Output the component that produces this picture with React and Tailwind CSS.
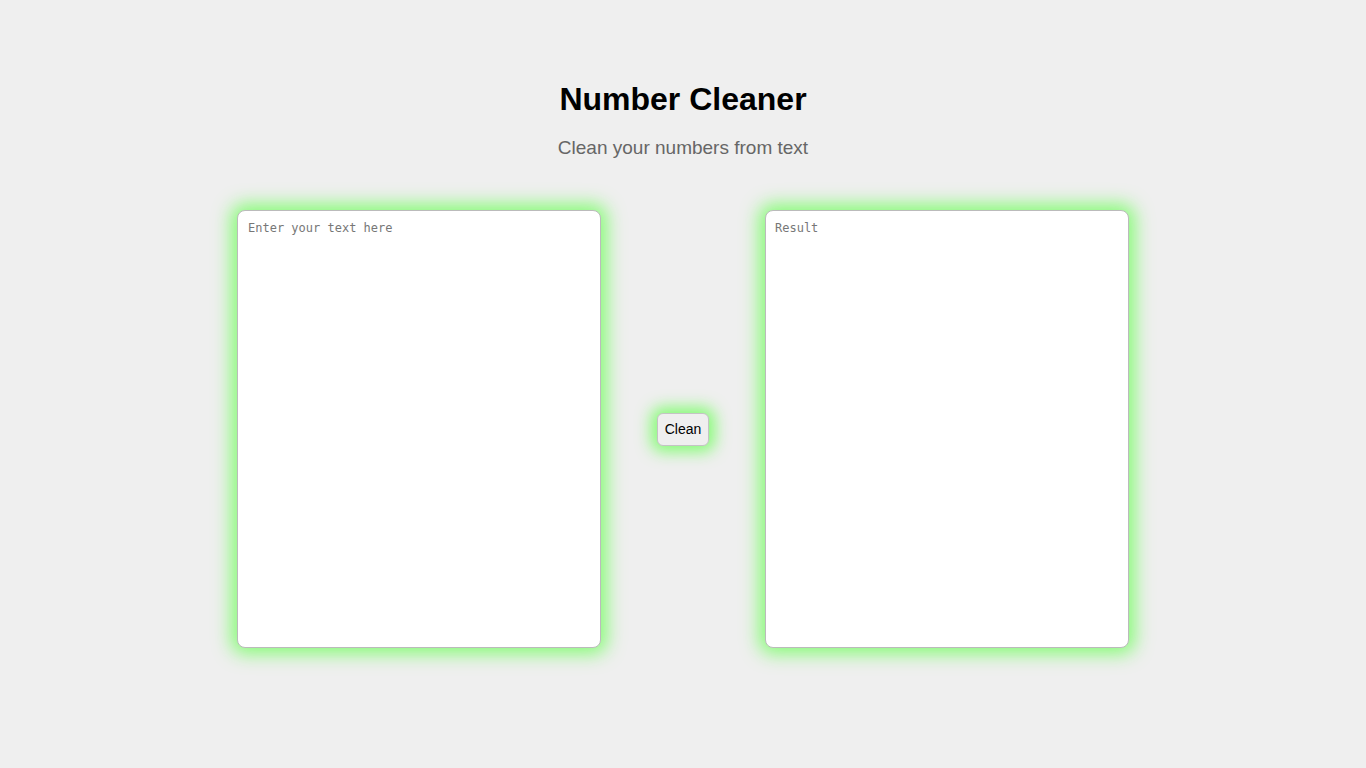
export default function App() {
	return (
		<div className="min-h-screen bg-[#efefef] pt-[81px] text-center font-['Liberation_Sans',Arial,sans-serif]">
			<h1 className="text-[32px] font-bold leading-[37px] text-black">Number Cleaner</h1>
			<p className="mt-[19px] text-[19px] leading-[22px] text-[#666]">Clean your numbers from text</p>
			<div className="mt-[51px] flex items-center justify-center gap-[56px]">
				<textarea
					placeholder="Enter your text here"
					className="h-[438px] w-[364px] resize-none rounded-[8px] border border-[#bbb] bg-white px-[10px] pt-[10px] font-['DejaVu_Sans_Mono',monospace] text-[12px] leading-[15px] outline-none shadow-[0_0_18px_6px_rgba(110,255,90,0.8)] placeholder:text-[#777]"
				/>
				<button className="h-[33px] w-[52px] rounded-[6px] border border-[#c4c4c4] bg-[#efefef] text-[14px] text-black shadow-[0_0_15px_6px_rgba(110,255,90,0.8)]">
					Clean
				</button>
				<textarea
					readOnly
					placeholder="Result"
					className="h-[438px] w-[364px] resize-none rounded-[8px] border border-[#bbb] bg-white px-[9px] pt-[10px] font-['DejaVu_Sans_Mono',monospace] text-[12px] leading-[15px] outline-none shadow-[0_0_18px_6px_rgba(110,255,90,0.8)] placeholder:text-[#777]"
				/>
			</div>
		</div>
	);
}
